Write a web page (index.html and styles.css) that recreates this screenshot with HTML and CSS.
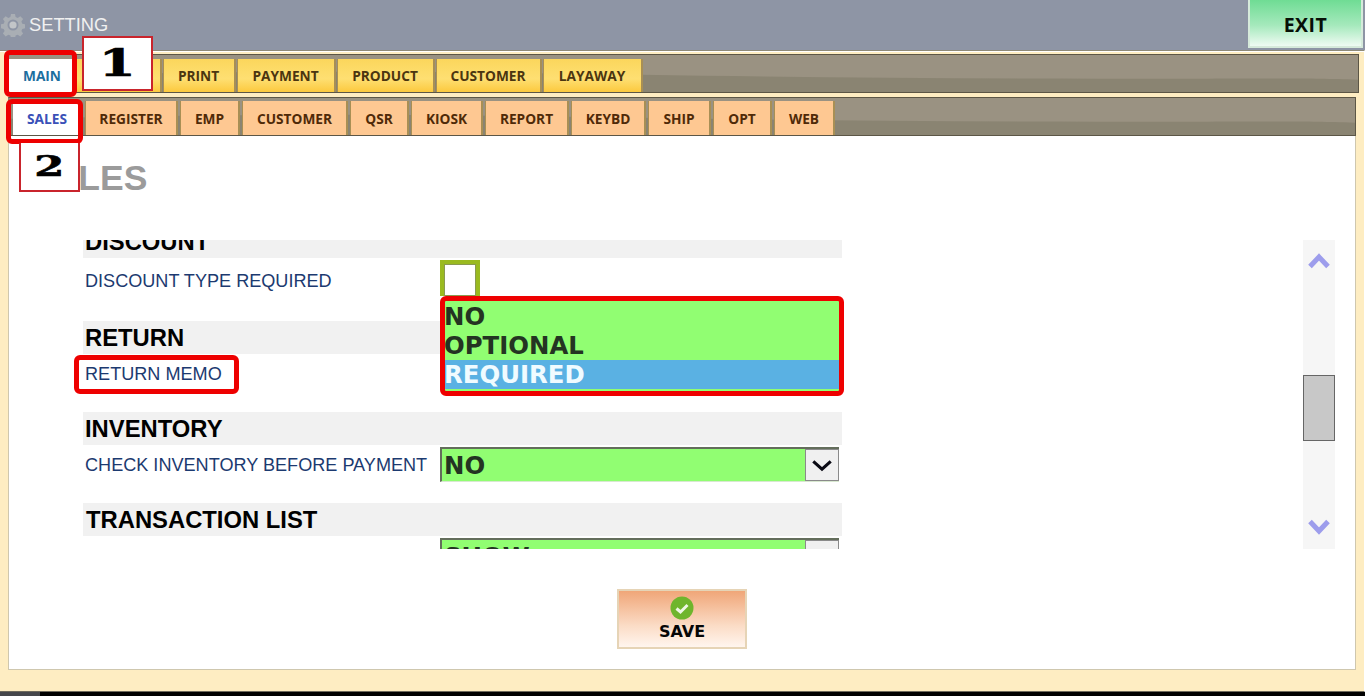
FILE: index.html
```html
<!DOCTYPE html>
<html lang="en">
<head>
<meta charset="utf-8">
<title>Setting</title>
<link rel="stylesheet" href="styles.css">
</head>
<body>
<div class="app">
  <header class="topbar">
    <div class="title">
      <svg class="gear" viewBox="0 0 24 24" width="24" height="24" aria-hidden="true"><path fill="#a9aeb4" fill-rule="evenodd" d="M10 1h4l.6 3 2.1.9 2.6-1.7 2.8 2.8-1.7 2.6.9 2.1 3 .6v4l-3 .6-.9 2.1 1.7 2.6-2.8 2.8-2.6-1.7-2.1.9-.6 3h-4l-.6-3-2.100-.9-2.600 1.700-2.800-2.800 1.700-2.600-.9-2.100-3-.6v-4l3-.6.9-2.100-1.700-2.600 2.800-2.800 2.600 1.700 2.100-.9zM12 6.500a5.500 5.500 0 1 0 0 11 5.500 5.500 0 0 0 0-11z"/><circle cx="12" cy="12" r="3.600" fill="#c2c5c8"/></svg>
      <span>SETTING</span>
    </div>
    <button class="exit">EXIT</button>
  </header>
  <main class="panel">
    <nav class="tabbar tabbar-main">
      <span class="tab tab-main tab-active main-active">MAIN</span>
      <span class="tab tab-main tab-hidden">SALES</span>
      <span class="tab tab-main w-print">PRINT</span>
      <span class="tab tab-main w-payment">PAYMENT</span>
      <span class="tab tab-main w-product">PRODUCT</span>
      <span class="tab tab-main w-customer">CUSTOMER</span>
      <span class="tab tab-main w-layaway">LAYAWAY</span>
    </nav>
    <nav class="tabbar tabbar-sub">
      <span class="tab tab-sub tab-active sub-active">SALES</span>
      <span class="tab tab-sub s-register">REGISTER</span>
      <span class="tab tab-sub s-emp">EMP</span>
      <span class="tab tab-sub s-customer">CUSTOMER</span>
      <span class="tab tab-sub s-qsr">QSR</span>
      <span class="tab tab-sub s-kiosk">KIOSK</span>
      <span class="tab tab-sub s-report">REPORT</span>
      <span class="tab tab-sub s-keybd">KEYBD</span>
      <span class="tab tab-sub s-ship">SHIP</span>
      <span class="tab tab-sub s-opt">OPT</span>
      <span class="tab tab-sub s-web">WEB</span>
    </nav>
    <section class="content">
      <h1 class="page-title">SALES</h1>
      <div class="settings">
        <div class="list">
          <div class="list-inner">
            <h2 class="band first-band">DISCOUNT</h2>
            <div class="row row-discount">
              <label class="label">DISCOUNT TYPE REQUIRED</label>
              <div class="focus-select"></div>
            </div>
            <h2 class="band">RETURN</h2>
            <div class="row">
              <label class="label">RETURN MEMO</label>
            </div>
            <h2 class="band">INVENTORY</h2>
            <div class="row">
              <label class="label">CHECK INVENTORY BEFORE PAYMENT</label>
              <div class="select"><span class="select-value">NO</span><span class="select-btn"><svg viewBox="0 0 24 14" width="22" height="13" aria-hidden="true"><path d="M2.500 2.500 12 11l9.500-8.500" fill="none" stroke="#0a0a14" stroke-width="3.400"/></svg></span></div>
            </div>
            <h2 class="band band-transaction">TRANSACTION LIST</h2>
            <div class="row">
              <label class="label"></label>
              <div class="select"><span class="select-value">SHOW</span><span class="select-btn"></span></div>
            </div>
          </div>
          <div class="dropdown">
            <div class="option">NO</div>
            <div class="option">OPTIONAL</div>
            <div class="option option-selected">REQUIRED</div>
          </div>
        </div>
        <div class="scrollbar">
          <svg class="chev" viewBox="0 0 22 16" width="22" height="16" aria-hidden="true"><path d="M2 13.500 11 4l9 9.500" fill="none" stroke="#9d9dec" stroke-width="5"/></svg>
          <div class="thumb"></div>
          <svg class="chev" viewBox="0 0 22 16" width="22" height="16" aria-hidden="true"><path d="M2 2.500 11 12l9-9.500" fill="none" stroke="#9d9dec" stroke-width="5"/></svg>
        </div>
      </div>
      <div class="actions">
        <button class="save">
          <svg viewBox="0 0 24 24" width="24" height="24" aria-hidden="true"><circle cx="12" cy="12" r="11.500" fill="#6fb52c"/><path d="M6.500 12.500 10.500 16l7-7" fill="none" stroke="#eef7e4" stroke-width="3"/></svg>
          <span>SAVE</span>
        </button>
      </div>
    </section>
  </main>
  <footer class="strip"><span class="strip-task"></span></footer>

  <div class="mark mark-main"></div>
  <div class="mark mark-sales"></div>
  <div class="mark mark-memo"><span>RETURN MEMO</span></div>
  <div class="callout callout-1"><span>1</span></div>
  <div class="callout callout-2"><span>2</span></div>
</div>
</body>
</html>
```
FILE: styles.css
```css
* { box-sizing: border-box; }
html, body { margin: 0; padding: 0; }
body { width: 1365px; height: 696px; overflow: hidden; background: #000; font-family: "Liberation Sans", Arial, sans-serif; }
.app { position: relative; width: 1365px; height: 696px; display: flex; flex-direction: column; }

.topbar { height: 50px; flex: none; background: #8e95a5; display: flex; justify-content: space-between; align-items: flex-start; padding-right: 2px; }
.title { display: flex; align-items: center; gap: 4px; padding: 13px 0 0 1px; color: #f0f0f0; font-size: 18.300px; }
.gear { display: block; }
.exit { width: 115px; height: 48px; border: 2px solid #d6eadb; border-top: 0; background: linear-gradient(180deg, #6fdc94 0%, #a5e9bc 55%, #effbf3 100%); color: #071007; font: 700 19.500px "Open Sans", sans-serif; letter-spacing: .5px; padding: 2px 0 0; }

.panel { flex: none; height: 642px; background: #feedc2; border-top: 1px solid #8f8a78; box-shadow: inset 0 1px 0 #fff; padding: 3px 6px 21px 2px; display: flex; flex-direction: column; border-bottom: 1px solid #6e6a5c; border-right: 1px solid #fff; }

.tabbar { flex: none; height: 39px; display: flex; align-items: flex-end; border: 1px solid #5c5646; border-left-color: #8d8672; background-color: #9a9282;
  background-image: url("data:image/svg+xml,%3Csvg xmlns='http://www.w3.org/2000/svg' width='1360' height='39' preserveAspectRatio='none'%3E%3Cpath d='M0 22C200 18 340 16 520 19S900 25 1100 25 1300 24 1360 26V39H0z' fill='%238a8472'/%3E%3C/svg%3E");
  background-size: 100% 100%; }
.tabbar-main { margin: 0 0 0 3px; width: 1354px; padding: 0 0 0 3px; gap: 4px; }
.tabbar-sub { margin: 4px 0 0 6px; width: 1348px; padding: 0 0 0 4px; gap: 5px; }

.tab { height: 33px; display: flex; align-items: center; justify-content: center; font: 700 13.700px "Open Sans", sans-serif; flex: none; box-shadow: 2px 0 0 #a88f55, -1px 0 0 #a88f55; }
.tab-main { background: linear-gradient(180deg, #fbd65c 0%, #fedf72 60%, #fcc93e 100%); color: #4b3510; padding-right: 1px; }
.tab-sub { background: #fec892; color: #4f2a08; height: 34px; }
.tab-active { background: #fff; box-shadow: none; }
.main-active { width: 63px; color: #1d6f9f; padding: 0 0 0 3px; }
.tab-hidden { width: 84px; }
.w-print { width: 70px; } .w-payment { width: 96px; } .w-product { width: 95px; } .w-customer { width: 103px; } .w-layaway { width: 97px; }
.sub-active { width: 68px; color: #3a51b8; }
.s-register { width: 90px; } .s-emp { width: 57px; } .s-customer { width: 103px; } .s-qsr { width: 56px; } .s-kiosk { width: 69px; } .s-report { width: 81px; } .s-keybd { width: 72px; } .s-ship { width: 60px; } .s-opt { width: 56px; } .s-web { width: 58px; }

.content { flex: 1; margin-left: 6px; width: 1348px; background: #fff; border: 1px solid #cfc7ae; border-top: 0; padding: 0 0 0 74px; display: flex; flex-direction: column; position: relative; }
.page-title { margin: 22px 0 0 -54px; height: 82px; color: #9b9b9b; font-size: 35.500px; line-height: 40px; font-weight: 700; }

.settings { display: flex; height: 309px; flex: none; }
.list { position: relative; width: 762px; height: 309px; overflow: hidden; flex: none; }
.list-inner { display: flex; flex-direction: column; width: 759px; margin-top: -15px; }
.band { margin: 0; height: 33px; flex: none; background: #f1f1f1; color: #000; font-size: 23.800px; line-height: 33px; font-weight: 700; padding-left: 2px; }
.band-transaction { padding-left: 3px; }
.row { height: 58px; flex: none; display: flex; padding: 2px 0 0 2px; align-items: flex-start; position: relative; }
.row-discount { height: 63px; }
.label { width: 355px; flex: none; color: #1c3a70; font-size: 18.100px; line-height: 37px; }
.row-discount .label { line-height: 42px; }
.focus-select { width: 40px; height: 36px; border: 4px solid #9aba20; border-bottom: 0; background: #fff; box-shadow: inset 0 0 0 1px #8a9a50; }
.select { width: 399px; height: 35px; display: flex; background: #91fe72; border: 2px solid #646e5c; border-width: 2px 0 0 2px; border-bottom: 1px solid #d8e8d0; }
.select-value { flex: 1; color: #243422; font: 700 24.400px/33px "DejaVu Sans", sans-serif; padding-left: 2px; }
.select-btn { width: 34px; background: #f0f0f0; border: 1px solid #8a8a8a; display: flex; align-items: center; justify-content: center; }

.dropdown { position: absolute; left: 357px; top: 56px; width: 404px; height: 100px; border: 5px solid #ee0000; border-radius: 6px; background: #91fe72; padding-top: 1px; }
.option { height: 29px; color: #243422; font: 700 24.400px/29px "DejaVu Sans", sans-serif; text-indent: -1px; }
.option-selected { background: #5ab1e3; color: #f0fbff; }

.scrollbar { margin-left: 458px; width: 32px; height: 309px; background: #f6f6f6; display: flex; flex-direction: column; align-items: center; }
.chev { display: block; flex: none; }
.scrollbar .chev:first-child { margin-top: 13px; }
.thumb { width: 32px; height: 66px; margin-top: 106px; background: #c8c8c8; border: 1px solid #666; flex: none; }
.scrollbar .chev:last-child { margin-top: 78px; }

.actions { display: flex; justify-content: center; padding: 40px 0 0; margin-left: -74px; }
.save { width: 130px; height: 60px; border: 2px solid #e6d4b6; background: linear-gradient(180deg, #f0a678 0%, #fbdcc6 62%, #fff5ee 100%); display: flex; flex-direction: column; align-items: center; padding: 5px 0 0; color: #060606; font: 700 16px/20px "DejaVu Sans", sans-serif; }
.save svg { display: block; margin-bottom: 2px; }

.strip { height: 4px; flex: none; background: #000; }
.strip-task { display: block; width: 40px; height: 4px; background: #45464a; }

.mark { position: absolute; border: 5px solid #ee0000; border-radius: 6px; }
.mark-main { left: 4px; top: 50px; width: 73px; height: 47px; }
.mark-sales { left: 6px; top: 99px; width: 77px; height: 45px; }
.mark-memo { left: 74px; top: 355px; width: 165px; height: 39px; background: #fff; }
.mark-memo span { position: absolute; left: 6px; top: 1px; color: #1c3a70; font-size: 18.100px; line-height: 27px; white-space: nowrap; }

.callout { position: absolute; background: #fff; border: 2px solid #c9242c; color: #000; display: flex; align-items: center; justify-content: center; font-family: "DejaVu Serif", serif; font-weight: 700; }
.callout span { display: block; transform: scaleX(1.6); -webkit-text-stroke: .6px #000; }
.callout-1 { left: 82px; top: 36px; width: 71px; height: 55px; font-size: 38px; padding-bottom: 3px; }
.callout-1 span { transform: scaleX(1.4); }
.callout-2 { left: 19px; top: 143px; width: 61px; height: 49px; border-top: 0; font-size: 27px; }
```
